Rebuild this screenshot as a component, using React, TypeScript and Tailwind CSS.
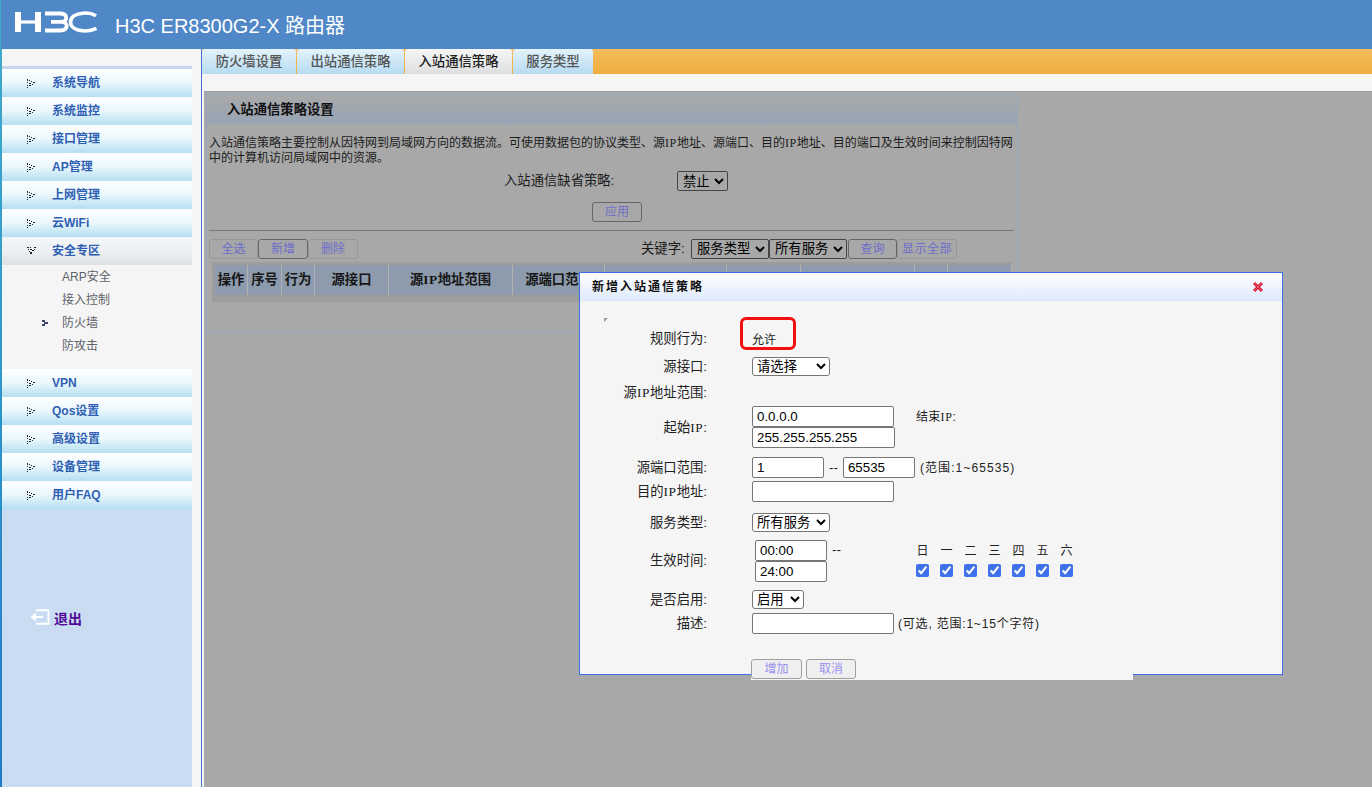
import React from "react";

const SANS = "font-['Liberation_Sans','Noto_Sans_CJK_SC',sans-serif]";

function IP({ className = "text-[12px]" }: { className?: string }) {
  return <span className={"font-['Liberation_Serif',serif] tracking-[0.6px] " + className}>IP</span>;
}

function Logo() {
  return (
    <svg width="84" height="22" viewBox="0 0 84 22" className="block -mt-[6px]">
      <g fill="#fff">
        <rect x="1" y="1" width="6" height="20" />
        <rect x="21" y="1" width="6" height="20" />
        <rect x="6" y="9.4" width="16" height="3.2" />
      </g>
      <path d="M31 2.5 H46 C54 2.5 54 10.6 47.5 10.9 H37 M47.5 10.9 C55 11.2 54.5 19.5 46 19.5 H31" fill="none" stroke="#fff" strokeWidth="3.8" />
      <path d="M82 4.8 C78 2.4 73 1.8 69 2.2 C60 3 56.5 7 56.5 11 C56.5 15 60 19 69 19.8 C73 20.2 78 19.6 82.5 17.4" fill="none" stroke="#fff" strokeWidth="3.6" />
    </svg>
  );
}

function DotArrow({ open = false }: { open?: boolean }) {
  if (open) {
    return (
      <svg width="9" height="8" viewBox="0 0 9 8" className="block" fill="#1e2233">
        <rect x="0" y="0" width="2" height="1" /><rect x="3" y="0" width="1" height="1" /><rect x="7" y="0" width="2" height="1" />
        <rect x="1" y="2" width="1" height="1" /><rect x="3" y="2" width="2" height="1" /><rect x="7" y="2" width="1" height="1" />
        <rect x="2" y="4" width="1" height="1" /><rect x="5" y="3" width="2" height="1" />
        <rect x="3" y="5" width="2" height="2" />
      </svg>
    );
  }
  return (
    <svg width="8" height="9" viewBox="0 0 8 9" className="block" fill="#1e2233">
      <rect x="0" y="0" width="1" height="2" /><rect x="2" y="1" width="1" height="1" />
      <rect x="4" y="2" width="1" height="1" /><rect x="0" y="3" width="1" height="1" />
      <rect x="6" y="3" width="2" height="1" />
      <rect x="2" y="4" width="2" height="1" /><rect x="5" y="5" width="1" height="1" />
      <rect x="0" y="6" width="1" height="1" /><rect x="2" y="6" width="2" height="1" />
      <rect x="0" y="8" width="1" height="1" />
    </svg>
  );
}

function NavItem({ label, open = false }: { label: string; open?: boolean }) {
  return (
    <div className={"h-[28px] flex items-center pl-[25px] " + (open ? "bg-gradient-to-b from-[#f4f6f8] via-[#ecf0f3] to-[#dde1e4]" : "bg-gradient-to-b from-[#ffffff] via-[#eaf7fc] to-[#b3dff2]")}>
      <span className="w-[25px] flex justify-start"><DotArrow open={open} /></span>
      <span className="text-[12px] font-bold text-[#2f5fb3]">{label}</span>
    </div>
  );
}

function SubItem({ label, active = false }: { label: React.ReactNode; active?: boolean }) {
  return (
    <div className="h-[23px] flex items-center pl-[40px] text-[12px] text-[#5f6368]">
      <span className="w-[20px]">
        {active && (
          <svg width="6" height="6" viewBox="0 0 6 6" className="block" fill="#3b4668">
            <rect x="0" y="0" width="3" height="2" /><rect x="0" y="4" width="3" height="2" /><rect x="2" y="2" width="4" height="2" />
          </svg>
        )}
      </span>
      {label}
    </div>
  );
}

function Sidebar() {
  return (
    <aside className="w-[190px] shrink-0 flex flex-col bg-[#cadcf1]">
      <div className="h-[17px] bg-[#f5f5f5]" />
      <div className="h-[3px] bg-[#c5d9ee]" />
      <NavItem label="系统导航" />
      <NavItem label="系统监控" />
      <NavItem label="接口管理" />
      <NavItem label="AP管理" />
      <NavItem label="上网管理" />
      <NavItem label="云WiFi" />
      <NavItem label="安全专区" open />
      <div className="bg-[#f5f5f5] h-[104px]">
        <SubItem label="ARP安全" />
        <SubItem label="接入控制" />
        <SubItem label="防火墙" active />
        <SubItem label="防攻击" />
      </div>
      <NavItem label="VPN" />
      <NavItem label="Qos设置" />
      <NavItem label="高级设置" />
      <NavItem label="设备管理" />
      <NavItem label="用户FAQ" />
      <div className="mt-[95px] pl-[28px] flex items-center gap-[4px]">
        <svg width="20" height="16" viewBox="0 0 20 16" className="block">
          <path d="M6 1.2 H18.5 V14.8 H6 M5 8 H13" fill="none" stroke="#fff" strokeWidth="2" />
          <path d="M0.5 8 L6 3.5 V12.5 Z" fill="#fff" />
        </svg>
        <span className="text-[14px] font-bold text-[#4f0a9a] mt-[5px]">退出</span>
      </div>
    </aside>
  );
}

function Tab({ label, active = false, width }: { label: string; active?: boolean; width: string }) {
  return (
    <div className={width + " h-[25px] rounded-t-[3px] flex items-center justify-center text-[13.33px] font-medium " + (active ? "bg-gradient-to-b from-[#f6f6f6] to-[#dcdee0] text-[#222]" : "bg-gradient-to-b from-[#e4f3fb] to-[#b5dbf1] text-[#555]")}>
      {label}
    </div>
  );
}

function DimButton({ label, width, dark = false }: { label: string; width: string; dark?: boolean }) {
  return (
    <div className={width + " h-[20px] rounded-[3px] border flex items-center justify-center text-[12px] text-[#6d6dc9] whitespace-nowrap " + (dark ? "border-[#666]" : "border-[#979797]")}>
      {label}
    </div>
  );
}

function DimSelect({ value, width }: { value: string; width: string }) {
  return (
    <select defaultValue={value} className={width + " h-[20px] text-[13.33px] text-black border border-[#444] rounded-[2px] bg-[#a8a8a8] pl-[1px]"}>
      <option>{value}</option>
    </select>
  );
}

function Th({ children, width }: { children?: React.ReactNode; width: string }) {
  return (
    <div className={width + " h-[30px] bg-[#8d9bad] border-r border-[#b2b2b2] flex items-center justify-center text-[13.33px] font-bold text-[#161616] whitespace-nowrap overflow-hidden"}>
      {children}
    </div>
  );
}

function Panel() {
  return (
    <section className="w-[812px] h-[239px] mt-[2px] border border-[#97a6ba] text-[#1c1c1c] text-[12px]">
      <div className="h-[29px] pl-[20px] pt-[1px] flex items-center text-[13.33px] font-bold text-[#111] bg-gradient-to-b from-[#a9a9a9] to-[#98a4b5] border-b border-[#97a6ba]">
        入站通信策略设置
      </div>
      <div className="pl-[2px] pt-[12px] leading-[15px] whitespace-nowrap">
        <div>入站通信策略主要控制从因特网到局域网方向的数据流。可使用数据包的协议类型、源<IP />地址、源端口、目的<IP />地址、目的端口及生效时间来控制因特网</div>
        <div>中的计算机访问局域网中的资源。</div>
      </div>
      <div className="flex items-center h-[20px] mt-[5px]">
        <span className="w-[470px] pl-[297px] whitespace-nowrap text-[13.33px]">入站通信缺省策略:</span>
        <DimSelect value="禁止" width="w-[51px]" />
      </div>
      <div className="flex pl-[385px] mt-[11px]">
        <DimButton label="应用" width="w-[50px]" dark />
      </div>
      <div className="mx-[2px] mt-[8px] w-[805px] h-px bg-[#777]" />
      <div className="flex items-center mt-[7px] pl-[2px] h-[21px]">
        <DimButton label="全选" width="w-[49px]" />
        <DimButton label="新增" width="w-[50px]" dark />
        <DimButton label="删除" width="w-[50px]" />
        <span className="ml-[283px] w-[50px] whitespace-nowrap text-[13.33px]">关键字:</span>
        <DimSelect value="服务类型" width="w-[78px]" />
        <DimSelect value="所有服务" width="w-[78px]" />
        <span className="w-px" />
        <DimButton label="查询" width="w-[49px]" dark />
        <DimButton label="显示全部" width="w-[60px] tracking-[0.5px]" />
      </div>
      <div className="ml-[5px] mt-[3px] w-[800px] h-[40px] pt-[3px] pl-[3px] bg-[#9d9d9d] flex items-start">
        <Th width="w-[33px]">操作</Th>
        <Th width="w-[34px]">序号</Th>
        <Th width="w-[33px]">行为</Th>
        <Th width="w-[74px]">源接口</Th>
        <Th width="w-[124px]">源<IP className="text-[13.33px]" />地址范围</Th>
        <Th width="w-[92px]">源端口范围</Th>
        <Th width="w-[122px]" />
        <Th width="w-[74px]" />
        <Th width="w-[114px]" />
        <Th width="w-[33px]" />
        <Th width="w-[64px]" />
      </div>
    </section>
  );
}

function FormRow({ label, className, children }: { label?: React.ReactNode; className: string; children?: React.ReactNode }) {
  return (
    <div className={"flex items-center " + className}>
      <div className="w-[127px] shrink-0 text-right whitespace-nowrap text-[13.33px]">{label}</div>
      <div className="ml-[45px] flex items-center min-w-0 relative">{children}</div>
    </div>
  );
}

function TextInput({ value, width }: { value: string; width: string }) {
  return (
    <input readOnly defaultValue={value} className={width + " h-[21px] block border border-[#767676] rounded-[2px] bg-white px-[4px] text-[13.33px] text-black"} />
  );
}

function FormSelect({ value, width }: { value: string; width: string }) {
  return (
    <select defaultValue={value} className={width + " h-[19px] text-[13.33px] text-black border border-[#767676] rounded-[3px] bg-white"}>
      <option>{value}</option>
    </select>
  );
}

function ModalButton({ label, width }: { label: string; width: string }) {
  return (
    <div className={width + " h-[20px] rounded-[3px] border border-[#a0a0a0] bg-[#efefef] flex items-center justify-center text-[12px] text-[#9a92f0]"}>
      {label}
    </div>
  );
}

function Modal() {
  const days = ["日", "一", "二", "三", "四", "五", "六"];
  const labelIP = <IP className="text-[13.33px]" />;
  return (
    <div className="absolute left-[579px] top-[272px] w-[704px] h-[403px] border border-[#3e6fe6] bg-[#f5f5f5] text-[12px] text-[#222]">
      <div className="h-[28px] pl-[12px] pr-[18px] flex items-center justify-between bg-gradient-to-b from-[#ffffff] to-[#dde9fb]">
        <span className="text-[12px] font-bold tracking-[2px] text-[#111]">新增入站通信策略</span>
        <svg width="12" height="12" viewBox="0 0 12 12" className="block">
          <path d="M2 2 L10 10 M10 2 L2 10" stroke="#d9102c" strokeWidth="3" />
          <path d="M2 2 L10 10 M10 2 L2 10" stroke="#f4a0a8" strokeWidth="0.6" />
        </svg>
      </div>
      <div className="h-[24px] pl-[24px] pt-[17px]">
        <div className="w-[4px] h-[4px] bg-[#9a9a9a] [clip-path:polygon(0_0,100%_0,0_100%)]" />
      </div>
      <FormRow label="规则行为:" className="h-[27px]">
        <span className="mt-[2px]">允许</span>
        <div className="absolute left-[-12px] top-[-12px] w-[56px] h-[33px] border-[3px] border-[#f20f12] rounded-[6px]" />
      </FormRow>
      <FormRow label="源接口:" className="h-[29px]"><FormSelect value="请选择" width="w-[78px]" /></FormRow>
      <FormRow label={<>源{labelIP}地址范围:</>} className="h-[24px]" />
      <FormRow label={<span className="inline-block pt-[3px]">起始{labelIP}:</span>} className="h-[43px]">
        <div className="flex flex-col">
          <TextInput value="0.0.0.0" width="w-[142px]" />
          <TextInput value="255.255.255.255" width="w-[143px]" />
        </div>
        <span className="ml-[21px] -mt-[19px] whitespace-nowrap tracking-[0.3px]">结束<IP />:</span>
      </FormRow>
      <FormRow label="源端口范围:" className="mt-[9px] h-[21px]">
        <TextInput value="1" width="w-[72px]" />
        <span className="mx-[5px] text-[13.33px]">--</span>
        <TextInput value="65535" width="w-[72px]" />
        <span className="ml-[5px] whitespace-nowrap text-[12px] tracking-[1.1px]">(范围:1~65535)</span>
      </FormRow>
      <FormRow label={<>目的{labelIP}地址:</>} className="mt-[3px] h-[21px]"><TextInput value="" width="w-[142px]" /></FormRow>
      <FormRow label="服务类型:" className="mt-[11px] h-[19px]"><FormSelect value="所有服务" width="w-[78px]" /></FormRow>
      <FormRow label="生效时间:" className="mt-[7px] h-[43px]">
        <div className="ml-[3px] flex flex-col">
          <TextInput value="00:00" width="w-[72px]" />
          <TextInput value="24:00" width="w-[72px]" />
        </div>
        <span className="ml-[5px] -mt-[21px] text-[13.33px]">--</span>
        <div className="ml-[75px] -mt-[2px] flex gap-[11px]">
          {days.map((d) => (
            <div key={d} className="w-[13px] flex flex-col items-center">
              <span className="h-[22px] whitespace-nowrap">{d}</span>
              <input type="checkbox" readOnly checked className="w-[13px] h-[13px] m-0 accent-[#3f72ea]" />
            </div>
          ))}
        </div>
      </FormRow>
      <FormRow label="是否启用:" className="mt-[8px] h-[19px]"><FormSelect value="启用" width="w-[52px]" /></FormRow>
      <FormRow label="描述:" className="mt-[4px] h-[21px]">
        <TextInput value="" width="w-[142px]" />
        <span className="ml-[4px] whitespace-nowrap tracking-[0.8px]">(可选, 范围:1~15个字符)</span>
      </FormRow>
      <div className="ml-[171px] w-[382px] h-[46px] pt-[25px] bg-[#f5f5f5] flex items-start">
        <ModalButton label="增加" width="w-[51px]" />
        <span className="w-[4px]" />
        <ModalButton label="取消" width="w-[50px]" />
      </div>
    </div>
  );
}

export default function App() {
  return (
    <div className={"relative w-[1372px] h-[787px] overflow-hidden bg-[#a8a8a8] flex flex-col " + SANS}>
      <header className="h-[49px] shrink-0 bg-[#5087c7] border-l border-[#3fa9c9] flex items-center pl-[13px] text-white">
        <Logo />
        <span className="ml-[17px] mt-[2px] text-[20px] whitespace-nowrap">H3C ER8300G2-X 路由器</span>
      </header>
      <div className="flex flex-1 min-h-0">
        <div className="w-[2px] shrink-0 bg-gradient-to-b from-[#3fa9c9] to-[#1a7ec6]" />
        <Sidebar />
        <div className="w-[9px] shrink-0 bg-[#f5f5f5]" />
        <div className="w-px shrink-0 bg-[#4a6fd0]" />
        <main className="flex-1 min-w-0 flex flex-col">
          <div className="h-[25px] flex gap-[1px] bg-gradient-to-b from-[#f3bb5c] to-[#efae3e]">
            <Tab label="防火墙设置" width="w-[94px]" />
            <Tab label="出站通信策略" width="w-[107px]" />
            <Tab label="入站通信策略" width="w-[107px]" active />
            <Tab label="服务类型" width="w-[80px]" />
          </div>
          <div className="h-[17px] bg-[#f5f5f5]" />
          <div className="flex-1 flex min-h-0">
            <div className="w-[2px] bg-[#f5f5f5]" />
            <div className="flex-1 pl-[2px] border-t border-[#9c9c9c]">
              <Panel />
            </div>
          </div>
        </main>
      </div>
      <Modal />
    </div>
  );
}
